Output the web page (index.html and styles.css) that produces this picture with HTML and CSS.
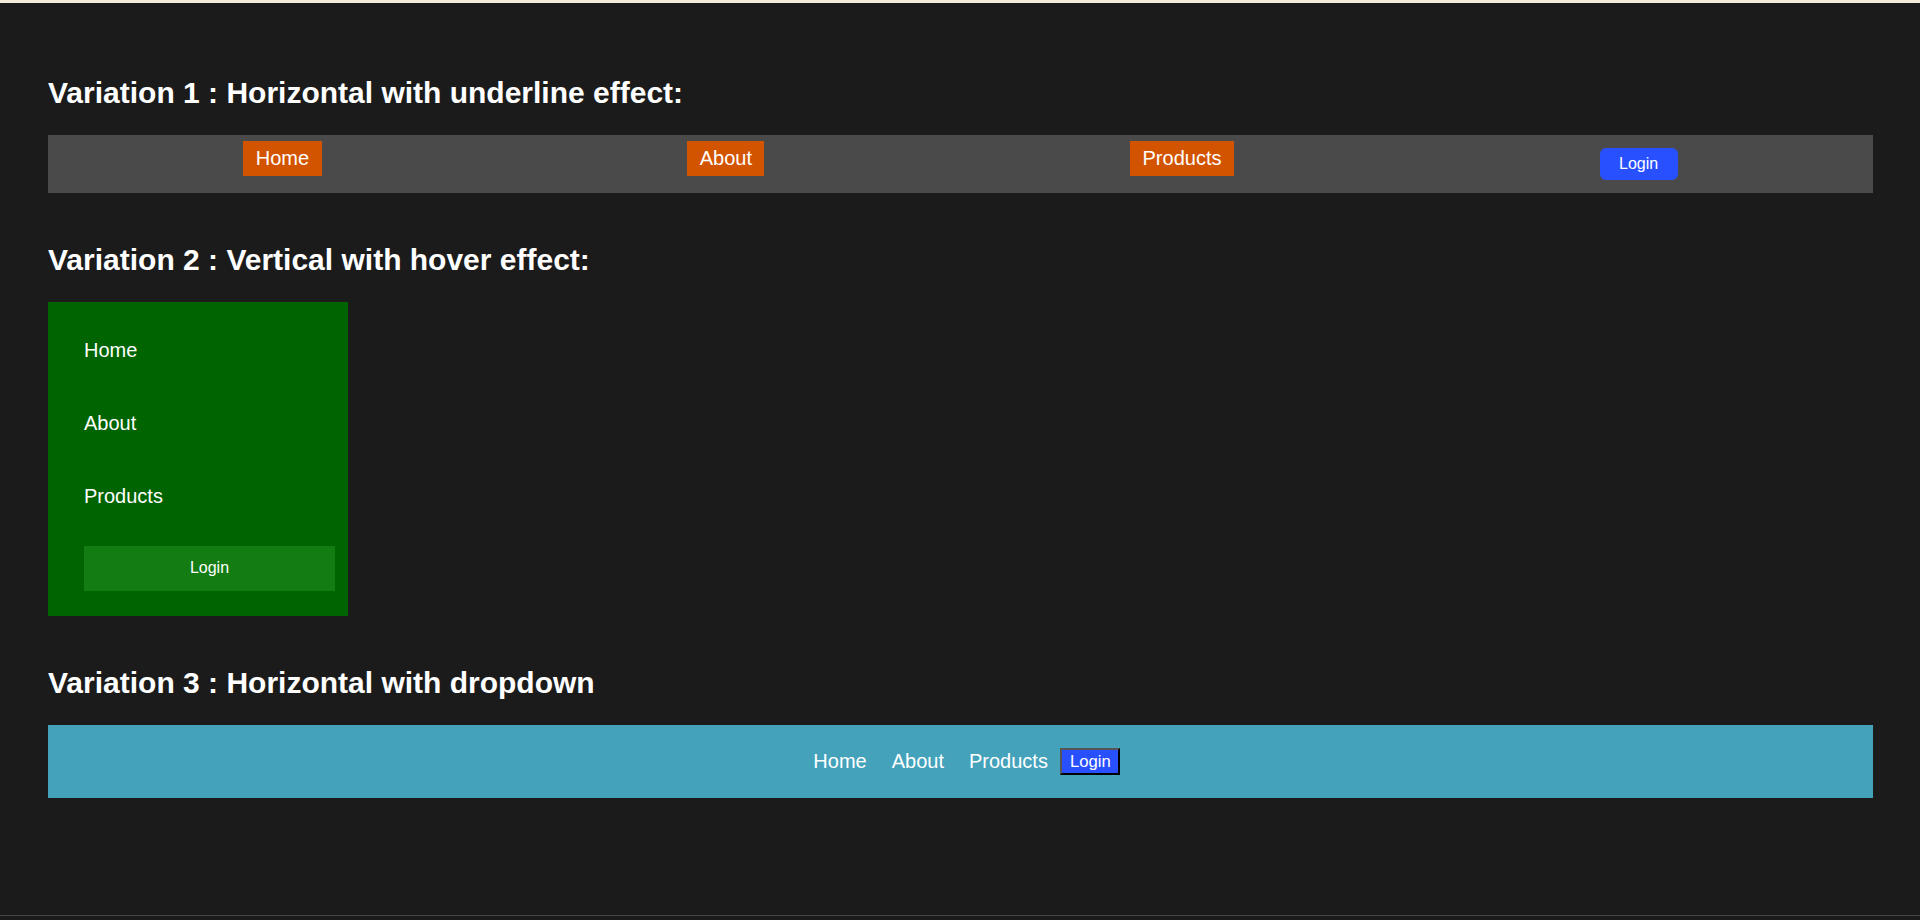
FILE: index.html
```html
<!DOCTYPE html>
<html lang="en">
<head>
<meta charset="utf-8">
<title>Navigation variations</title>
<link rel="stylesheet" href="styles.css">
</head>
<body>
<div class="top-strip"></div>
<main class="page">
  <h2 class="title">Variation 1 : Horizontal with underline effect:</h2>
  <nav class="nav-underline">
    <ul class="nav-underline__list">
      <li class="nav-underline__item"><a class="nav-underline__link" href="#">Home</a></li>
      <li class="nav-underline__item"><a class="nav-underline__link" href="#">About</a></li>
      <li class="nav-underline__item"><a class="nav-underline__link" href="#">Products</a></li>
      <li class="nav-underline__item"><button class="nav-underline__login" type="button">Login</button></li>
    </ul>
  </nav>

  <h2 class="title">Variation 2 : Vertical with hover effect:</h2>
  <nav class="nav-vertical">
    <ul class="nav-vertical__list">
      <li class="nav-vertical__item"><a class="nav-vertical__link" href="#">Home</a></li>
      <li class="nav-vertical__item"><a class="nav-vertical__link" href="#">About</a></li>
      <li class="nav-vertical__item"><a class="nav-vertical__link" href="#">Products</a></li>
    </ul>
    <button class="nav-vertical__login" type="button">Login</button>
  </nav>

  <h2 class="title">Variation 3 : Horizontal with dropdown</h2>
  <nav class="nav-dropdown">
    <a class="nav-dropdown__link" href="#">Home</a>
    <a class="nav-dropdown__link" href="#">About</a>
    <a class="nav-dropdown__link" href="#">Products</a>
    <button class="nav-dropdown__login" type="button">Login</button>
  </nav>
</main>
</body>
</html>
```

FILE: styles.css
```css
html {
  background: #1b1b1b;
}

body {
  margin: 0;
  background: #1b1b1b;
  color: #ffffff;
  font-family: "Liberation Sans", Arial, sans-serif;
  font-size: 20px;
}

.top-strip {
  height: 3px;
  background: #f4ecda;
}

.page {
  box-sizing: border-box;
  min-height: 913px;
  padding: 47.5px 47px 20px 48px;
  display: flex;
  flex-direction: column;
  border-bottom: 1px solid #444444;
}

.title {
  margin: 25px 0;
  font-size: 30px;
  font-weight: bold;
  line-height: 34.5px;
  color: #ffffff;
}

/* Variation 1 */
.nav-underline {
  background: #4a4a4a;
  padding: 12.5px;
  margin-bottom: 25px;
}

.nav-underline__list {
  list-style: none;
  margin: 0;
  padding: 0;
  display: flex;
  justify-content: space-around;
  align-items: flex-start;
}

.nav-underline__item {
  line-height: 23px;
}

.nav-underline__link {
  color: #ffffff;
  text-decoration: none;
  background: #d35400;
  padding: 6.25px 12.5px;
}

.nav-underline__login {
  display: block;
  height: 32px;
  margin-top: 0.5px;
  padding: 0 19.5px;
  border: none;
  border-radius: 6px;
  background: #2850ff;
  color: #ffffff;
  font-family: "Liberation Sans", Arial, sans-serif;
  font-size: 16px;
  line-height: 32px;
}

/* Variation 2 */
.nav-vertical {
  width: 300px;
  box-sizing: border-box;
  background: #006400;
  padding: 11.5px 13px 25px 36px;
  margin-bottom: 25px;
}

.nav-vertical__list {
  list-style: none;
  margin: 0;
  padding: 0;
}

.nav-vertical__item {
  padding: 25px 0;
  line-height: 23px;
}

.nav-vertical__link {
  color: #ffffff;
  text-decoration: none;
}

.nav-vertical__login {
  display: block;
  width: 100%;
  margin-top: 13.5px;
  height: 44.7px;
  border: none;
  background: #137c13;
  color: #ffffff;
  font-family: "Liberation Sans", Arial, sans-serif;
  font-size: 16px;
}

/* Variation 3 */
.nav-dropdown {
  background: #45a2bb;
  padding: 22.7px 0;
  line-height: 23px;
  display: flex;
  justify-content: center;
  align-items: center;
  margin-bottom: 25px;
}

.nav-dropdown__link {
  color: #ffffff;
  text-decoration: none;
  padding: 0 12.5px;
}

.nav-dropdown__login {
  height: 27.3px;
  padding: 0 7.5px;
  border-width: 2.5px;
  border-style: solid;
  border-color: #555555 #000000 #000000 #555555;
  background: #2850ff;
  color: #ffffff;
  font-family: "Liberation Sans", Arial, sans-serif;
  font-size: 16.67px;
  line-height: 19px;
}
```
